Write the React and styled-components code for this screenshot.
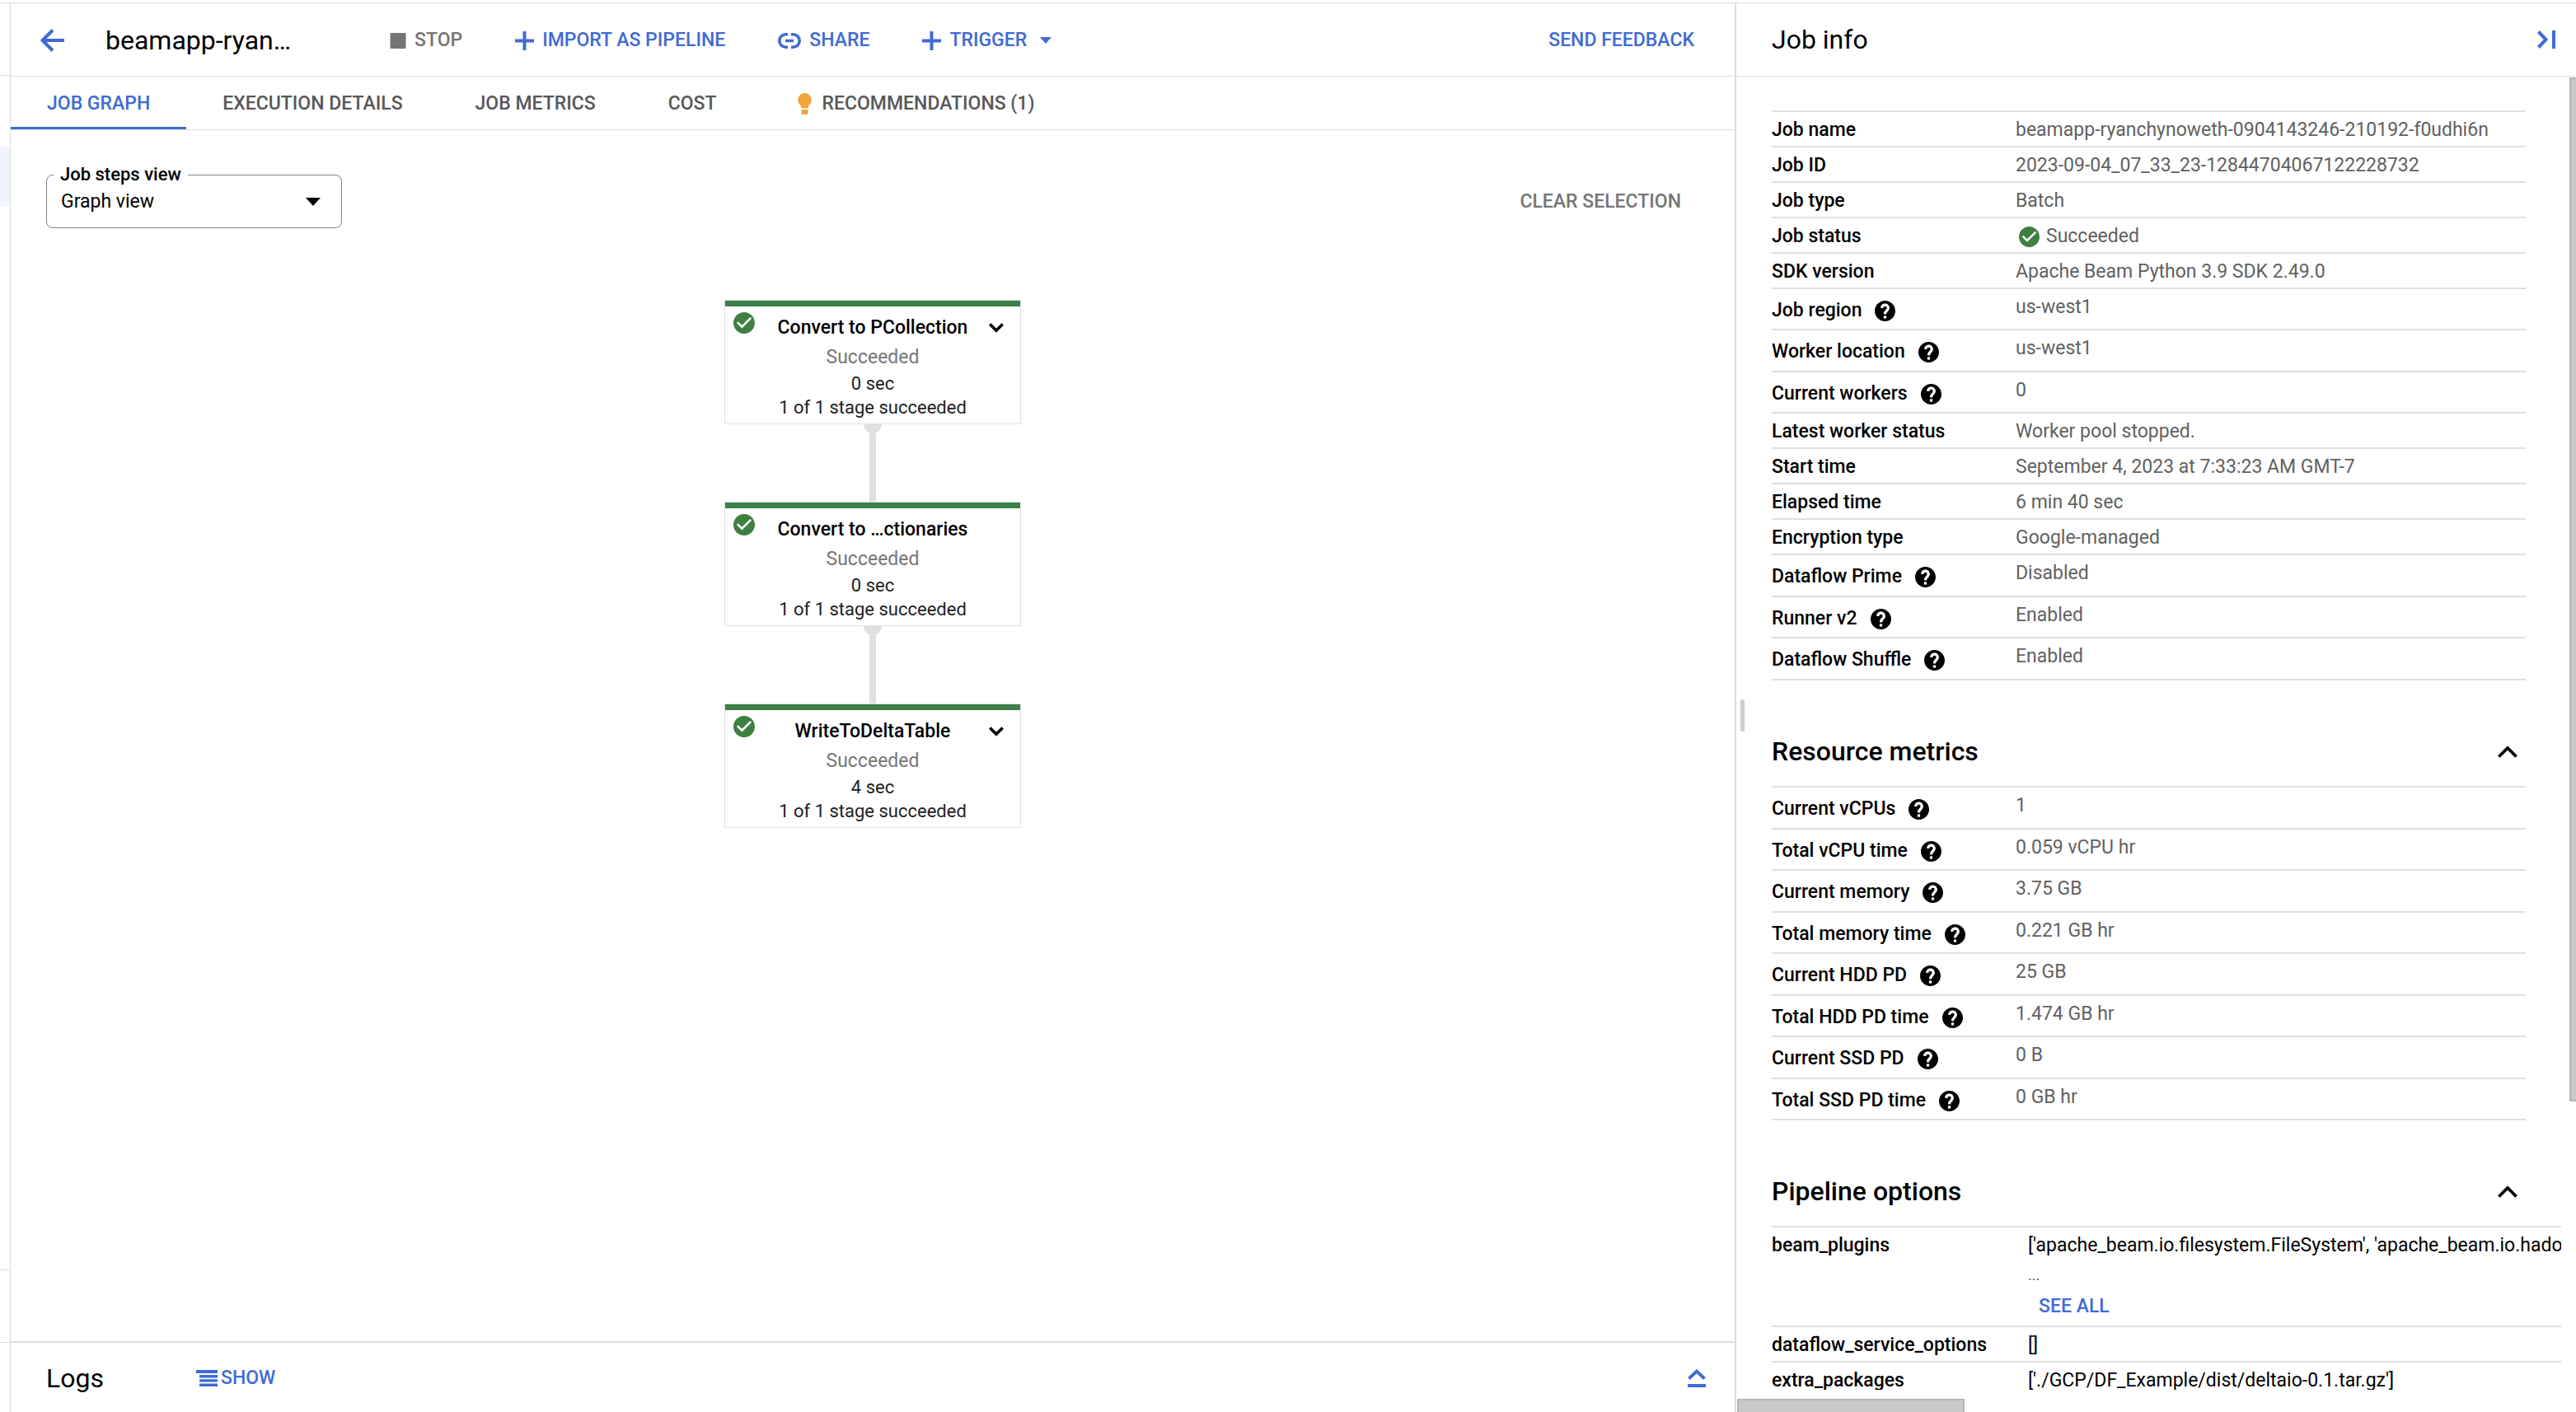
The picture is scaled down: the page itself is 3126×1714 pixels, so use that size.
import React, { useState } from 'react';
import styled, { createGlobalStyle } from 'styled-components';

const color = {
  line: '#dedede',
  rule: '#e0e0e0',
  blue: '#3f6bd3',
  text: '#000000',
  muted: '#616161',
  tab: '#585858',
  disabled: '#757575',
  green: '#3b8048',
};

const size = { small: '22px', body: '23px', title: '32px' };

const GlobalStyle = createGlobalStyle`
  * { box-sizing: border-box; }
  body {
    margin: 0;
    background: #fff;
    color: ${color.text};
    font-family: Roboto, 'Liberation Sans', sans-serif;
    font-size: ${size.body};
    line-height: 28px;
  }
  button, select { font: inherit; color: inherit; }
  svg { display: block; flex: none; }
`;

/* ---------- Page frame ---------- */

const Page = styled.div`
  display: grid;
  grid-template-rows: 3px minmax(0, 1fr);
  height: 100vh;
  overflow: hidden;
`;

const Frame = styled.div`
  grid-row: 2;
  display: grid;
  grid-template-columns: 13px minmax(0, 1fr) 1021px;
  min-height: 0;
  border-top: 1px solid ${color.line};
`;

const Rail = styled.nav`
  display: flex;
  flex-direction: column;
  border-right: 1px solid ${color.line};
`;

const RailSection = styled.div`
  height: 88px;
  border-bottom: 1px solid ${color.line};
`;

const RailList = styled.div`
  flex: 1;
  padding-top: 86px;
  border-bottom: 1px solid ${color.line};
`;

const RailActive = styled.div`
  height: 72px;
  background: #eff4fd;
`;

const RailFooter = styled.div`
  height: 84px;
`;

const Main = styled.main`
  display: flex;
  flex-direction: column;
  min-width: 0;
`;

const IconButton = styled.button`
  display: inline-flex;
  align-items: center;
  justify-content: center;
  padding: 0;
  border: 0;
  background: none;
  color: ${(p) => p.$color || color.text};
  cursor: pointer;
`;

const TextButton = styled.button`
  display: inline-flex;
  align-items: center;
  gap: ${(p) => p.$gap || '10px'};
  padding: 0;
  border: 0;
  background: none;
  color: ${(p) => (p.disabled ? color.disabled : color.blue)};
  font-weight: 500;
  white-space: nowrap;
  cursor: ${(p) => (p.disabled ? 'default' : 'pointer')};
`;

/* ---------- Header and tabs ---------- */

const Header = styled.header`
  display: flex;
  align-items: center;
  flex: none;
  height: 89px;
  padding: 2px 49px 0 36px;
  border-bottom: 1px solid ${color.line};
`;

const PageTitle = styled.h1`
  min-width: 345px;
  margin: 0 0 0 50px;
  font-size: ${size.title};
  font-weight: 400;
  line-height: 40px;
  white-space: nowrap;
`;

const Actions = styled.div`
  display: flex;
  flex: 1;
  gap: 64px;
`;

const CaretWrap = styled.span`
  padding-left: 6px;
`;

const Tabs = styled.div`
  display: flex;
  flex: none;
  height: 65px;
  border-bottom: 1px solid ${color.line};
`;

const Tab = styled.button`
  display: flex;
  align-items: center;
  gap: 6px;
  padding: 5px 44px 0;
  border: 0;
  border-bottom: 3px solid ${(p) => (p.$active ? color.blue : 'transparent')};
  background: none;
  color: ${(p) => (p.$active ? color.blue : color.tab)};
  font-weight: 500;
  white-space: nowrap;
  cursor: pointer;
`;

const TabIcon = styled.span`
  display: flex;
  justify-content: center;
  width: 30px;
  margin-left: 4px;
`;

/* ---------- Graph pane ---------- */

const GraphPane = styled.section`
  flex: 1;
  min-height: 0;
  overflow: hidden;
`;

const GraphToolbar = styled.div`
  display: flex;
  align-items: center;
  justify-content: space-between;
  padding: 54px 65px 0 43px;
`;

const SelectField = styled.div`
  position: relative;
  display: flex;
  align-items: center;
  width: 359px;
  height: 65px;
`;

const SelectLabel = styled.label`
  position: absolute;
  top: -14px;
  left: 9px;
  padding: 0 8px;
  background: #fff;
  font-size: ${size.small};
  font-weight: 500;
`;

const Select = styled.select`
  width: 100%;
  height: 100%;
  padding: 0 17px;
  appearance: none;
  border: 1px solid #80868b;
  border-radius: 8px;
  background: #fff;
`;

const SelectArrow = styled.span`
  position: absolute;
  right: 26px;
  pointer-events: none;
`;

const Graph = styled.div`
  display: flex;
  flex-direction: column;
  align-items: center;
  padding-top: 87px;
`;

const Node = styled.article`
  width: 360px;
  padding-bottom: 5px;
  border: 1px solid ${color.rule};
  background: #fff;
  text-align: center;
`;

const NodeBar = styled.div`
  height: 7px;
  background: ${color.green};
`;

const NodeHeader = styled.div`
  display: grid;
  grid-template-columns: 38px 1fr 38px;
  padding: 7px 10px 0;
`;

const NodeTitle = styled.h2`
  margin: 0;
  font-size: ${size.body};
  font-weight: 500;
  line-height: 38px;
  white-space: nowrap;
`;

const NodeStatus = styled.div`
  color: ${color.disabled};
  line-height: 34px;
`;

const NodeMeta = styled.div`
  color: #212121;
  font-size: ${size.small};
  line-height: 29px;
`;

/* ---------- Logs ---------- */

const LogsBar = styled.footer`
  display: flex;
  align-items: center;
  flex: none;
  height: 86px;
  padding: 2px 35px 0 43px;
  border-top: 2px solid ${color.line};
`;

const LogsTitle = styled.h2`
  min-width: 182px;
  margin: 0;
  font-size: ${size.title};
  font-weight: 400;
  line-height: 40px;
`;

const Spacer = styled.div`
  flex: 1;
`;

/* ---------- Side panel ---------- */

const Panel = styled.aside`
  position: relative;
  display: flex;
  flex-direction: column;
  min-width: 0;
  min-height: 0;
  border-left: 2px solid ${color.line};
`;

const PanelHeader = styled.header`
  display: flex;
  align-items: center;
  justify-content: space-between;
  flex: none;
  height: 89px;
  padding: 0 25px 0 43px;
  border-bottom: 1px solid ${color.line};
`;

const PanelTitle = styled.h2`
  margin: 0;
  font-size: ${size.title};
  font-weight: 400;
  line-height: 40px;
`;

const ResizeHandle = styled.div`
  position: absolute;
  top: calc(50% - 10px);
  left: 5px;
  width: 5px;
  height: 39px;
  border-radius: 3px;
  background: #cccccc;
`;

const ScrollArea = styled.div`
  display: grid;
  grid-template-columns: minmax(0, 1fr) 18px;
  grid-template-rows: minmax(0, 1fr) 27px;
  flex: 1;
  min-height: 0;
`;

const ScrollContent = styled.div`
  padding: 41px 43px 0;
  overflow: hidden;
`;

const VerticalTrack = styled.div`
  display: flex;
  justify-content: flex-end;
  padding-top: 1px;
`;

const VerticalThumb = styled.div`
  width: 8px;
  height: 78%;
  border: solid #b5b5b5;
  border-width: 2px 0 2px 2px;
  background: #c9c9c9;
`;

const HorizontalTrack = styled.div`
  display: flex;
  align-items: flex-end;
  padding-left: 1px;
`;

const HorizontalThumb = styled.div`
  width: 276px;
  height: 16px;
  border: solid #b5b5b5;
  border-width: 2px 2px 0 2px;
  background: #c9c9c9;
`;

const InfoTable = styled.table`
  width: 100%;
  border-spacing: 0;
  border-top: 2px solid ${color.rule};
`;

const LabelCell = styled.th`
  width: ${(p) => p.$width || '296px'};
  min-width: ${(p) => p.$width || '296px'};
  padding: 8px 0 5px;
  border-bottom: 2px solid ${color.rule};
  font-weight: 500;
  text-align: left;
  vertical-align: top;
  white-space: nowrap;
`;

const ValueCell = styled.td`
  padding: 8px 0 5px;
  border-bottom: 2px solid ${color.rule};
  color: ${(p) => (p.$dark ? color.text : color.muted)};
  vertical-align: top;
  white-space: nowrap;
`;

const HelpRow = styled.tr`
  &:nth-child(even) ${LabelCell} { padding-bottom: 4px; }
`;

const HelpLabel = styled.span`
  display: flex;
  align-items: center;
  gap: 16px;
  height: 36px;
`;

const StatusValue = styled.span`
  display: flex;
  align-items: center;
  gap: 8px;
  padding-left: 4px;
`;

const SectionHeading = styled.h3`
  margin: 44px 0 0;
  font-size: ${size.title};
  font-weight: 500;
  line-height: 40px;
`;

const SectionToggle = styled.button`
  display: flex;
  align-items: center;
  justify-content: space-between;
  width: 100%;
  height: 84px;
  padding: 0 10px 0 0;
  border: 0;
  background: none;
  text-align: left;
  cursor: pointer;
`;

const OptionLine = styled.div`
  margin-top: ${(p) => (p.$first ? '-4px' : '0')};
  font-size: ${(p) => (p.$small ? '18px' : size.body)};
  color: ${(p) => (p.$small ? color.muted : color.text)};
  line-height: 36px;
`;

const SeeAllLine = styled.div`
  display: flex;
  height: 38px;
  padding: 2px 0 0 13px;
`;

/* ---------- Icons ---------- */

const BackIcon = () => (
  <svg width="29" height="28" viewBox="0 0 29 28" fill="none" stroke="currentColor" strokeWidth="4">
    <path d="M29 14H3M15 1.5L2.5 14 15 26.5" />
  </svg>
);

const StopIcon = () => (
  <svg width="20" height="19" viewBox="0 0 20 19">
    <rect x="0.5" width="19" height="19" fill="currentColor" />
  </svg>
);

const PlusIcon = () => (
  <svg width="23" height="23" viewBox="0 0 23 23" fill="none" stroke="currentColor" strokeWidth="4">
    <path d="M11.5 0v23M0 11.5h23" />
  </svg>
);

const LinkIcon = () => (
  <svg width="28" height="19" viewBox="0 0 28 19" fill="none" stroke="currentColor" strokeWidth="3.6">
    <path d="M12 1.8H9.5a7.7 7.7 0 0 0 0 15.4H12M16 1.8h2.5a7.7 7.7 0 0 1 0 15.4H16M9 9.5h10" />
  </svg>
);

const CaretIcon = ({ width, height }) => (
  <svg width={width} height={height} viewBox="0 0 18 10" preserveAspectRatio="none">
    <path d="M0 0h18l-9 10z" fill="currentColor" />
  </svg>
);

const BulbIcon = () => (
  <svg width="17" height="26" viewBox="0 0 17 26" fill="#f2a33a">
    <path d="M8.5 0a8.3 8.3 0 0 1 8.3 8.3c0 3-1.5 5.1-3.4 6.7L12.6 18.2H4.4L3.6 15C1.7 13.4.2 11.3.2 8.3A8.3 8.3 0 0 1 8.5 0zM4.5 20h8v4.5a1.5 1.5 0 0 1-1.5 1.5H6a1.5 1.5 0 0 1-1.5-1.5z" />
  </svg>
);

const CheckIcon = ({ size: s = 26 }) => (
  <svg width={s} height={s} viewBox="2 2 20 20" fill="#3d8040">
    <path d="M12 2C6.48 2 2 6.48 2 12s4.48 10 10 10 10-4.48 10-10S17.52 2 12 2zm-2 15l-5-5 1.41-1.41L10 14.17l7.59-7.59L19 8l-9 9z" />
  </svg>
);

const HelpIcon = () => (
  <svg width="25" height="25" viewBox="2 2 20 20" fill="currentColor">
    <path d="M12 2C6.48 2 2 6.48 2 12s4.48 10 10 10 10-4.48 10-10S17.52 2 12 2zm1 17h-2v-2h2v2zm2.07-7.75l-.9.92C13.45 12.9 13 13.5 13 15h-2v-.5c0-1.1.45-2.1 1.17-2.83l1.24-1.26c.37-.36.59-.86.59-1.41 0-1.1-.9-2-2-2s-2 .9-2 2H8c0-2.21 1.79-4 4-4s4 1.79 4 4c0 .88-.36 1.68-.93 2.25z" />
    <path d="M9 9a3 3 0 1 1 5.200 2.100C13 12.300 12 13 12 15M12 16.800v2.400" fill="none" stroke="#fff" strokeWidth="2.600" />
  </svg>
);

const NodeChevron = () => (
  <svg width="18" height="12" viewBox="0 0 18 12" fill="none" stroke="currentColor" strokeWidth="3.6">
    <path d="M1.3 1.5L9 9.2l7.700-7.700" />
  </svg>
);

const SectionChevron = () => (
  <svg width="24" height="15" viewBox="0 0 24 15" fill="none" stroke="currentColor" strokeWidth="3.8">
    <path d="M1.4 13.5L12 2.9l10.6 10.6" />
  </svg>
);

const CollapseIcon = () => (
  <svg width="22" height="22" viewBox="0 0 22 22" fill="none" stroke="currentColor" strokeWidth="4">
    <path d="M1.5 1.5L10.5 11l-9 9.5M20 0v22" />
  </svg>
);

const ExpandLogsIcon = () => (
  <svg width="22" height="22" viewBox="0 0 22 22" fill="none" stroke="currentColor" strokeWidth="3.8">
    <path d="M1.5 11.5L11 2.5l9.5 9M0 20h22" />
  </svg>
);

const LogsIcon = () => (
  <svg width="26" height="20" viewBox="0 0 26 20" fill="currentColor">
    <path d="M0 0h26v4H0zM4 6h22v3.4H4zM4 11.2h22v3.4H4zM4 16.5h22v3.5H4z" />
  </svg>
);

const Connector = () => (
  <svg width="22" height="94" viewBox="0 0 22 94" fill={color.rule} aria-hidden="true">
    <path d="M0 0h22a11 11 0 0 1-22 0zM7 9h8v85H7z" />
  </svg>
);

/* ---------- Data ---------- */

const tabs = ['JOB GRAPH', 'EXECUTION DETAILS', 'JOB METRICS', 'COST', 'RECOMMENDATIONS (1)'];

const steps = [
  { name: 'Convert to PCollection', time: '0 sec', expandable: true },
  { name: 'Convert to …ctionaries', time: '0 sec', expandable: false },
  { name: 'WriteToDeltaTable', time: '4 sec', expandable: true },
];

const jobInfo = [
  { label: 'Job name', value: 'beamapp-ryanchynoweth-0904143246-210192-f0udhi6n' },
  { label: 'Job ID', value: '2023-09-04_07_33_23-12844704067122228732' },
  { label: 'Job type', value: 'Batch' },
  { label: 'Job status', value: 'Succeeded', status: true },
  { label: 'SDK version', value: 'Apache Beam Python 3.9 SDK 2.49.0' },
  { label: 'Job region', value: 'us-west1', help: true },
  { label: 'Worker location', value: 'us-west1', help: true },
  { label: 'Current workers', value: '0', help: true },
  { label: 'Latest worker status', value: 'Worker pool stopped.' },
  { label: 'Start time', value: 'September 4, 2023 at 7:33:23 AM GMT-7' },
  { label: 'Elapsed time', value: '6 min 40 sec' },
  { label: 'Encryption type', value: 'Google-managed' },
  { label: 'Dataflow Prime', value: 'Disabled', help: true },
  { label: 'Runner v2', value: 'Enabled', help: true },
  { label: 'Dataflow Shuffle', value: 'Enabled', help: true },
];

const metrics = [
  { label: 'Current vCPUs', value: '1', help: true },
  { label: 'Total vCPU time', value: '0.059 vCPU hr', help: true },
  { label: 'Current memory', value: '3.75 GB', help: true },
  { label: 'Total memory time', value: '0.221 GB hr', help: true },
  { label: 'Current HDD PD', value: '25 GB', help: true },
  { label: 'Total HDD PD time', value: '1.474 GB hr', help: true },
  { label: 'Current SSD PD', value: '0 B', help: true },
  { label: 'Total SSD PD time', value: '0 GB hr', help: true },
];

/* ---------- Parts ---------- */

function KeyValueTable({ rows }) {
  return (
    <InfoTable>
      <tbody>
        {rows.map(({ label, value, help, status }) => {
          const Row = help ? HelpRow : 'tr';
          return (
            <Row key={label}>
              <LabelCell scope="row">
                {help ? (
                  <HelpLabel>
                    {label}
                    <IconButton aria-label={`Help: ${label}`}><HelpIcon /></IconButton>
                  </HelpLabel>
                ) : label}
              </LabelCell>
              <ValueCell>
                {status ? <StatusValue><CheckIcon size={25} />{value}</StatusValue> : value}
              </ValueCell>
            </Row>
          );
        })}
      </tbody>
    </InfoTable>
  );
}

function Section({ title, children }) {
  const [open, setOpen] = useState(true);
  return (
    <section>
      <SectionHeading>
        <SectionToggle aria-expanded={open} onClick={() => setOpen(!open)}>
          {title}
          <SectionChevron />
        </SectionToggle>
      </SectionHeading>
      {open && children}
    </section>
  );
}

function Step({ name, time, expandable }) {
  return (
    <Node>
      <NodeBar />
      <NodeHeader>
        <CheckIcon />
        <NodeTitle>{name}</NodeTitle>
        {expandable && <IconButton aria-label={`Expand ${name}`}><NodeChevron /></IconButton>}
      </NodeHeader>
      <NodeStatus>Succeeded</NodeStatus>
      <NodeMeta>{time}</NodeMeta>
      <NodeMeta>1 of 1 stage succeeded</NodeMeta>
    </Node>
  );
}

export default function App() {
  const [tab, setTab] = useState(0);
  return (
    <Page>
      <GlobalStyle />
      <Frame>
        <Rail aria-label="Products">
          <RailSection />
          <RailList><RailActive /></RailList>
          <RailSection />
          <RailFooter />
        </Rail>

        <Main>
          <Header>
            <IconButton $color={color.blue} aria-label="Back"><BackIcon /></IconButton>
            <PageTitle>beamapp-ryan…</PageTitle>
            <Actions>
              <TextButton disabled><StopIcon />STOP</TextButton>
              <TextButton><PlusIcon />IMPORT AS PIPELINE</TextButton>
              <TextButton><LinkIcon />SHARE</TextButton>
              <TextButton>
                <PlusIcon />TRIGGER
                <CaretWrap><CaretIcon width={14} height={8} /></CaretWrap>
              </TextButton>
            </Actions>
            <TextButton>SEND FEEDBACK</TextButton>
          </Header>

          <Tabs role="tablist">
            {tabs.map((name, i) => (
              <Tab key={name} role="tab" aria-selected={i === tab} $active={i === tab} onClick={() => setTab(i)}>
                {i === 4 && <TabIcon><BulbIcon /></TabIcon>}
                {name}
              </Tab>
            ))}
          </Tabs>

          <GraphPane>
            <GraphToolbar>
              <SelectField>
                <Select id="steps-view" defaultValue="graph">
                  <option value="graph">Graph view</option>
                  <option value="table">Table view</option>
                </Select>
                <SelectLabel htmlFor="steps-view">Job steps view</SelectLabel>
                <SelectArrow><CaretIcon width={18} height={10} /></SelectArrow>
              </SelectField>
              <TextButton disabled>CLEAR SELECTION</TextButton>
            </GraphToolbar>
            <Graph>
              {steps.map((step, i) => (
                <React.Fragment key={step.name}>
                  {i > 0 && <Connector />}
                  <Step {...step} />
                </React.Fragment>
              ))}
            </Graph>
          </GraphPane>

          <LogsBar>
            <LogsTitle>Logs</LogsTitle>
            <TextButton $gap="4px"><LogsIcon />SHOW</TextButton>
            <Spacer />
            <IconButton $color={color.blue} aria-label="Expand logs"><ExpandLogsIcon /></IconButton>
          </LogsBar>
        </Main>

        <Panel>
          <PanelHeader>
            <PanelTitle>Job info</PanelTitle>
            <IconButton $color={color.blue} aria-label="Collapse panel"><CollapseIcon /></IconButton>
          </PanelHeader>
          <ScrollArea>
            <ScrollContent>
              <KeyValueTable rows={jobInfo} />
              <Section title="Resource metrics">
                <KeyValueTable rows={metrics} />
              </Section>
              <Section title="Pipeline options">
                <InfoTable>
                  <tbody>
                    <tr>
                      <LabelCell scope="row" $width="311px">beam_plugins</LabelCell>
                      <ValueCell $dark>
                        <OptionLine $first>
                          ['apache_beam.io.filesystem.FileSystem', 'apache_beam.io.hadoopfilesystem.HadoopFileSystem']
                        </OptionLine>
                        <OptionLine $small>...</OptionLine>
                        <SeeAllLine><TextButton>SEE ALL</TextButton></SeeAllLine>
                      </ValueCell>
                    </tr>
                    <tr>
                      <LabelCell scope="row" $width="311px">dataflow_service_options</LabelCell>
                      <ValueCell $dark>[]</ValueCell>
                    </tr>
                    <tr>
                      <LabelCell scope="row" $width="311px">extra_packages</LabelCell>
                      <ValueCell $dark>['./GCP/DF_Example/dist/deltaio-0.1.tar.gz']</ValueCell>
                    </tr>
                  </tbody>
                </InfoTable>
              </Section>
            </ScrollContent>
            <VerticalTrack><VerticalThumb /></VerticalTrack>
            <HorizontalTrack><HorizontalThumb /></HorizontalTrack>
          </ScrollArea>
          <ResizeHandle />
        </Panel>
      </Frame>
    </Page>
  );
}
